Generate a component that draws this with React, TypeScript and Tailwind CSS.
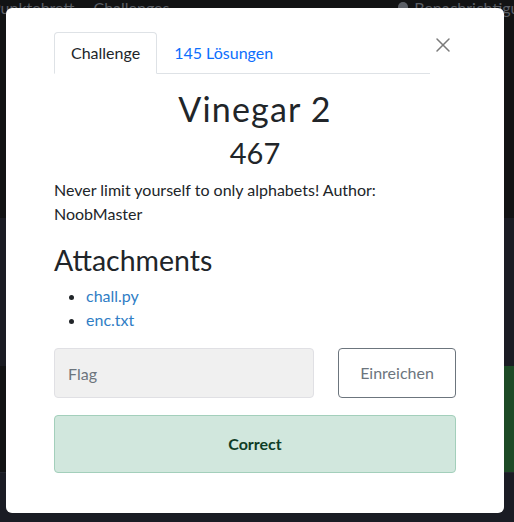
import { X } from "lucide-react";

function Backdrop() {
  return (
    <div className="flex h-[522px] w-full flex-col overflow-hidden bg-[#121314]">
      <div className="flex h-[218px] shrink-0 items-start justify-between">
        <div className="-ml-[9px] -mt-[4px] flex gap-[19px] text-[16px] leading-[24px] text-[#5b5f66]">
          <span>Punktebrett</span>
          <span>Challenges</span>
        </div>
        <div className="-mr-[40px] -mt-[4px] flex items-center gap-[6px] text-[16px] leading-[24px] text-[#5b5f66]">
          <span className="h-[12px] w-[10px] rounded-full bg-[#5b5f66]" />
          <span>Benachrichtigungen</span>
        </div>
      </div>
      <div className="h-[148px] shrink-0 bg-[#1a1c23]" />
      <div className="flex h-[106px] shrink-0 justify-end bg-[#121314]">
        <div className="w-[120px] bg-[#1d4a26]" />
      </div>
      <div className="flex-1 border-t border-[#23262e] bg-[#1a1c24]" />
    </div>
  );
}

export default function App() {
  return (
    <div className="relative h-[522px] w-[514px] overflow-hidden font-['Lato','Liberation_Sans',sans-serif]">
      <Backdrop />

      <div className="absolute inset-0 pl-[6px] pt-[8px]">
        <div className="w-[498px] rounded-[6px] bg-white px-[48px] pb-[40px] pt-[24px] text-[#212529]">
          {/* tabs + close */}
          <div className="flex items-start">
            <ul className="flex flex-1 border-b border-[#dee2e6]">
              <li className="-mb-px rounded-t-[4px] border border-[#dee2e6] border-b-white bg-white px-4 py-2 text-[16px] leading-[24px] text-[#212529]">
                Challenge
              </li>
              <li className="-mb-px border border-transparent px-4 py-2 text-[16px] leading-[24px] text-[#0d6efd]">
                145 Lösungen
              </li>
            </ul>
            <button className="ml-[2px] mr-[2px] mt-[2px] text-[#7a7a7a]">
              <X size={24} strokeWidth={1.5} className="-m-[1px]" />
            </button>
          </div>

          <h3 className="mt-[14px] text-center text-[34px] font-normal leading-[42px] tracking-[1.2px]">
            Vinegar 2
          </h3>
          <h4 className="mt-[5px] text-center text-[29px] font-normal leading-[36px]">467</h4>

          <p className="mt-[7px] text-[16px] leading-[24px]">
            Never limit yourself to only alphabets! Author: NoobMaster
          </p>

          <h3 className="mt-[17px] text-[28.5px] font-normal leading-[34px]">Attachments</h3>
          <ul className="mt-[7px] list-disc pl-[32px] text-[16px] leading-[24px] marker:text-[#212529]">
            <li>
              <a className="text-[#2f7dc5]">chall.py</a>
            </li>
            <li>
              <a className="text-[#2f7dc5]">enc.txt</a>
            </li>
          </ul>

          <div className="mt-[16px] flex gap-6">
            <input
              placeholder="Flag"
              className="h-[50px] flex-1 rounded-[4px] border border-[#e0e0e4] bg-[#f0f0f0] px-[13px] text-[16px] placeholder:text-[#6c757d] outline-none"
            />
            <button className="h-[50px] w-[118px] rounded-[4px] border border-[#6c757d] text-[16px] text-[#6c757d]">
              Einreichen
            </button>
          </div>

          <div className="mt-[17px] flex h-[58px] items-center justify-center rounded-[4px] border border-[#a3cfbb] bg-[#d1e7dd] text-[16px] font-bold text-[#0f3d26]">
            Correct
          </div>
        </div>
      </div>
    </div>
  );
}
